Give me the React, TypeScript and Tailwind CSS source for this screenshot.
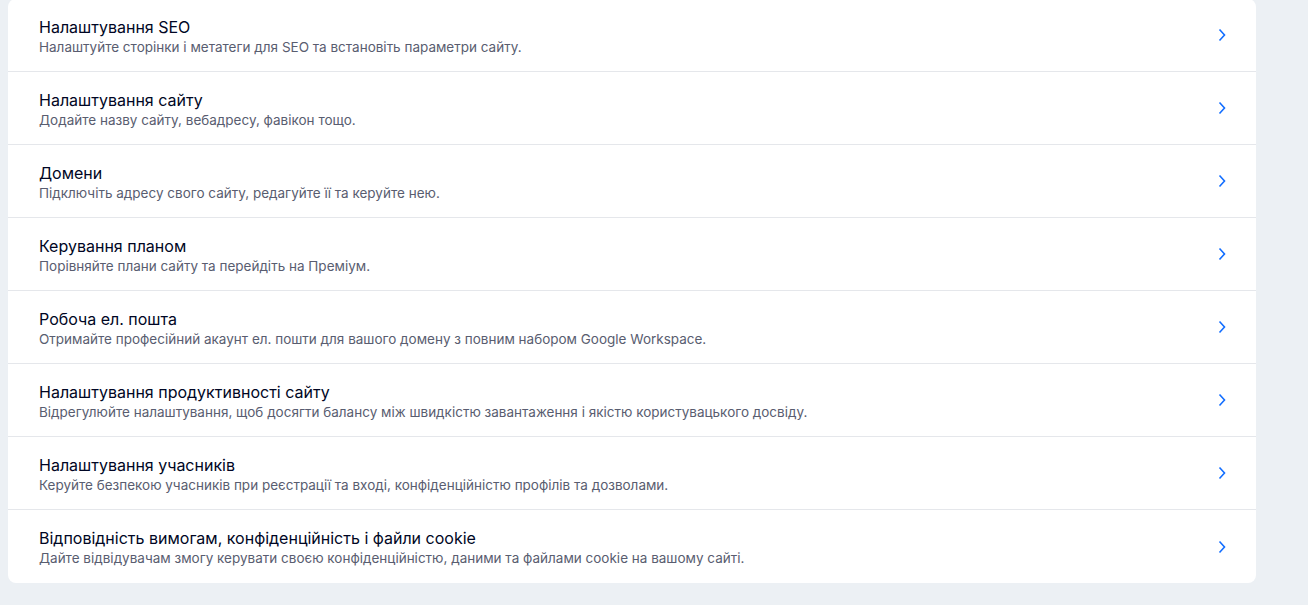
import React from "react";

const items = [
  ["Налаштування SEO", "Налаштуйте сторінки і метатеги для SEO та встановіть параметри сайту."],
  ["Налаштування сайту", "Додайте назву сайту, вебадресу, фавікон тощо."],
  ["Домени", "Підключіть адресу свого сайту, редагуйте її та керуйте нею."],
  ["Керування планом", "Порівняйте плани сайту та перейдіть на Преміум."],
  ["Робоча ел. пошта", "Отримайте професійний акаунт ел. пошти для вашого домену з повним набором Google Workspace."],
  ["Налаштування продуктивності сайту", "Відрегулюйте налаштування, щоб досягти балансу між швидкістю завантаження і якістю користувацького досвіду."],
  ["Налаштування учасників", "Керуйте безпекою учасників при реєстрації та вході, конфіденційністю профілів та дозволами."],
  ["Відповідність вимогам, конфіденційність і файли cookie", "Дайте відвідувачам змогу керувати своєю конфіденційністю, даними та файлами cookie на вашому сайті."],
];

export default function App() {
  return (
    <div className="w-[1308px] h-[605px] bg-[#ecf0f4] overflow-hidden" style={{ fontFamily: "Inter, 'Noto Sans', sans-serif" }}>
      <div className="ml-[8px] w-[1248px] mt-[-1px] bg-white rounded-[8px] overflow-hidden">
        {items.map(([t, d], i) => (
          <div
            key={i}
            className={`h-[73px] flex items-center pl-[31px] pr-[30px] ${i < items.length - 1 ? "border-b border-[#e5e7eb]" : ""}`}
          >
            <div className="flex-1 flex flex-col pt-[3px]">
              <div className="text-[16px] leading-[20px] text-[#000624]">{t}</div>
              <div className="text-[13.5px] leading-[20px] text-[#595d70]">{d}</div>
            </div>
            <svg width="8" height="14" viewBox="0 0 8 14">
              <path d="M1.5 1.5 L6.5 7 L1.5 12.5" fill="none" stroke="#116dff" strokeWidth="1.6" />
            </svg>
          </div>
        ))}
      </div>
    </div>
  );
}
